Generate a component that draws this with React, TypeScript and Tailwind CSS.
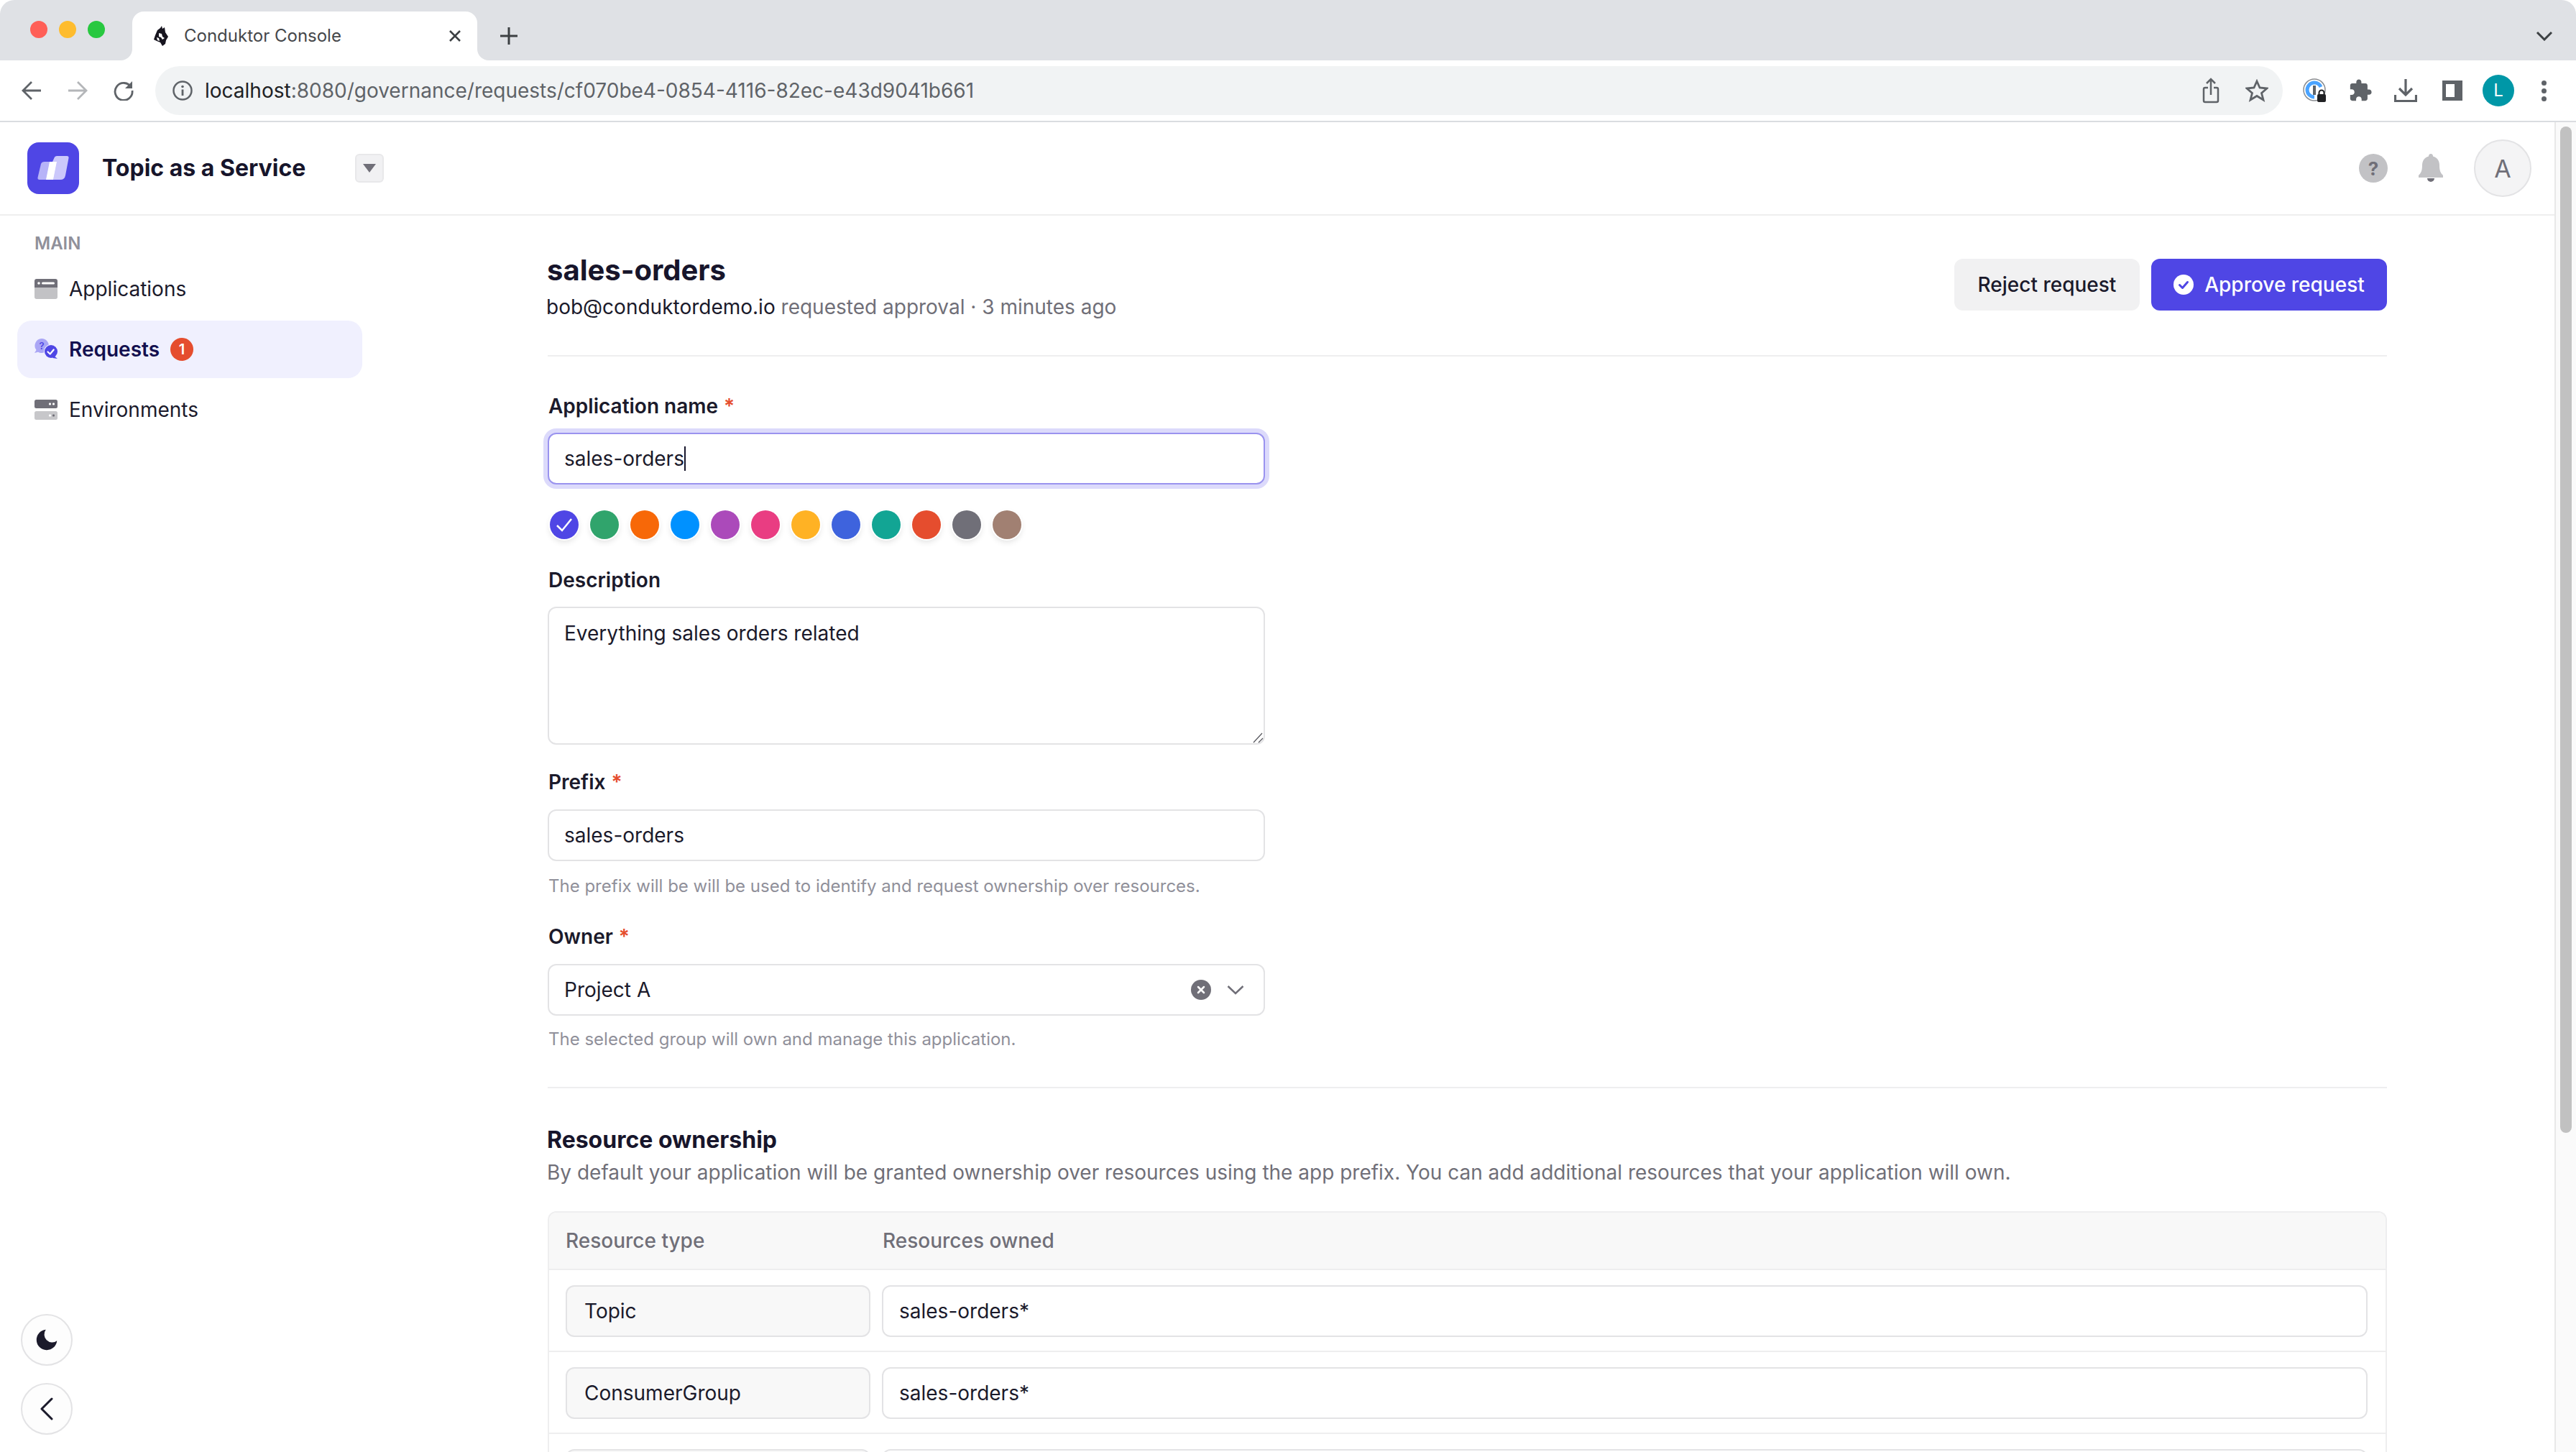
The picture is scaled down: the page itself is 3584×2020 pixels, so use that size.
import React from "react";

const Req = () => <span className="text-[#e54d2e] ml-[8px]">*</span>;

function Label({ children, required, className = "" }: { children: React.ReactNode; required?: boolean; className?: string }) {
  return (
    <div className={`h-[40px] leading-[40px] text-[28px] font-semibold text-[#1b1a2b] pl-[1px] ${className}`}>
      {children}
      {required && <Req />}
    </div>
  );
}

function Field({ children, className = "border-[#e3e3e5]" }: { children: React.ReactNode; className?: string }) {
  return (
    <div className={`w-[998px] h-[72px] rounded-[12px] border-2 bg-white flex items-center pl-[21px] text-[28px] text-[#1b1a2b] ${className}`}>
      {children}
    </div>
  );
}

const swatches = ["#4f46e5", "#30a46c", "#f76808", "#0091ff", "#ab4aba", "#e93d82", "#ffb224", "#3e63dd", "#12a594", "#e54d2e", "#706f78", "#a18072"];

function Logo() {
  return (
    <svg width="72" height="72" viewBox="0 0 72 72">
      <rect width="72" height="72" rx="16" fill="#4f46e5" />
      <path d="M38 20.500 Q39 19 41 19 H55 Q58 19 57.500 22 L53 46 Q52 52 46 52 H30 L35 27 Z" fill="#cbc8fb" />
      <path d="M19 30 Q20 27 24 27 H41 L36 52 H17 Q14 52 14.500 49 Z" fill="#b7b3f8" />
      <path d="M31 27 H41 L36 52 H26 Z" fill="#ffffff" />
    </svg>
  );
}

function AppIcon() {
  return (
    <svg width="32" height="28" viewBox="0 0 32 28">
      <path d="M0 12H32V25a3 3 0 0 1-3 3H3a3 3 0 0 1-3-3Z" fill="#c2c2c5" />
      <path d="M0 12V3a3 3 0 0 1 3-3H29a3 3 0 0 1 3 3V12Z" fill="#706f78" />
      <circle cx="6" cy="6" r="1.800" fill="#fff" />
      <rect x="10" y="4.500" width="18" height="3" rx="1.500" fill="#fff" />
    </svg>
  );
}

function ReqIcon() {
  return (
    <svg width="32" height="30" viewBox="0 0 32 30">
      <path d="M10 0a10 10 0 1 1-5 18.700L0 20l2.500-4A10 10 0 0 1 10 0Z" fill="#aaa6f5" />
      <text x="10" y="15" fontSize="13" fontWeight="600" fill="#4f46e5" textAnchor="middle" fontFamily="Inter, sans-serif">?</text>
      <circle cx="23" cy="18" r="10" fill="#f0f0fe" />
      <circle cx="23" cy="18" r="9" fill="#4f46e5" />
      <path d="M27 24l5 4-7-1Z" fill="#4f46e5" />
      <path d="M18.500 18.500l3.200 3 5-6" fill="none" stroke="#fff" strokeWidth="2.200" strokeLinecap="round" strokeLinejoin="round" />
    </svg>
  );
}

function EnvIcon() {
  return (
    <svg width="32" height="28" viewBox="0 0 32 28">
      <rect width="32" height="12" rx="2.500" fill="#706f78" />
      <rect y="16" width="32" height="12" rx="2.500" fill="#c7c7ca" />
      <rect x="20" y="4.500" width="3" height="3" rx="1" fill="#fff" />
      <rect x="25" y="4.500" width="3" height="3" rx="1" fill="#fff" />
      <rect x="20" y="20.500" width="3" height="3" rx="1" fill="#fff" />
      <rect x="25" y="20.500" width="3" height="3" rx="1" fill="#706f78" />
    </svg>
  );
}

function NavItem({ icon, children, active }: { icon: React.ReactNode; children: React.ReactNode; active?: boolean }) {
  return (
    <div className={`h-[80px] rounded-[20px] flex items-center pl-[24px] text-[28px] ${active ? "bg-[#f0f0fe] text-[#13104f] font-semibold" : "text-[#1b1a2b]"}`}>
      <span className="w-[32px] flex justify-center mr-[16px]">{icon}</span>
      {children}
    </div>
  );
}

function Row({ type, value }: { type: string; value: string }) {
  return (
    <div className="h-[114px] border-b-2 border-[#eeeeef] flex pt-[21px] pl-[23px] pr-[25px] gap-[16px] shrink-0">
      <div className="w-[424px] h-[72px] rounded-[12px] border-2 border-[#e3e3e5] bg-[#f8f8f8] flex items-center pl-[24px] text-[28px] text-[#1b1a2b]">{type}</div>
      <div className="flex-1 h-[72px] rounded-[12px] border-2 border-[#e3e3e5] bg-white flex items-center pl-[22px] text-[28px] text-[#1b1a2b]">{value}</div>
    </div>
  );
}

function Chrome() {
  return (
    <>
      <div className="h-[84px] bg-[#dfe1e5] rounded-t-[20px] flex items-end shrink-0">
        <div className="flex items-center gap-[16px] w-[184px] h-[84px] pl-[42px] pb-[2px]">
          <span className="w-[24px] h-[24px] rounded-full bg-[#ff5f57]" />
          <span className="w-[24px] h-[24px] rounded-full bg-[#febc2e]" />
          <span className="w-[24px] h-[24px] rounded-full bg-[#28c840]" />
        </div>
        <div className="relative w-[480px] h-[68px] bg-white rounded-t-[16px] flex items-center pl-[28px] pr-[22px]">
          <div className="absolute -left-[16px] bottom-0 w-[16px] h-[16px] bg-white"><div className="w-full h-full bg-[#dfe1e5] rounded-br-[16px]" /></div>
          <div className="absolute -right-[16px] bottom-0 w-[16px] h-[16px] bg-white"><div className="w-full h-full bg-[#dfe1e5] rounded-bl-[16px]" /></div>
          <svg width="24" height="28" viewBox="0 0 24 28" className="mr-[20px] shrink-0">
            <path d="M13 0l1 4 3-2 1 7 4 6-3 5-1 5-4 3-3-5-5-2-4-2 2-6 3-7 4-3Z" fill="#17151f" />
            <path d="M9 10l4 1 1 4 3 2-3 2-2-3-3-1ZM6 16l3 1 1 4-3-1Z" fill="#fff" />
          </svg>
          <span className="text-[24px] text-[#45474a] whitespace-nowrap flex-1">Conduktor Console</span>
          <svg width="18" height="20" viewBox="0 0 18 20"><path d="M2 3l14 14M16 3L2 17" stroke="#3c4043" strokeWidth="2.600" /></svg>
        </div>
        <div className="h-[68px] flex items-center ml-[32px]">
          <svg width="24" height="24" viewBox="0 0 24 24"><path d="M12 0v24M0 12h24" stroke="#3c4043" strokeWidth="3" /></svg>
        </div>
        <div className="flex-1" />
        <div className="h-[68px] flex items-center pr-[32px]">
          <svg width="24" height="14" viewBox="0 0 24 14"><path d="M2 2l10 10L22 2" fill="none" stroke="#3c4043" strokeWidth="3" /></svg>
        </div>
      </div>
      <div className="h-[86px] bg-white border-b-2 border-[#dadce0] flex items-center shrink-0">
        <div className="w-[216px] flex items-center pl-[30px] gap-[36px] shrink-0">
          <svg width="28" height="28" viewBox="0 0 28 28"><path d="M27 14H3M14 2 2 14l12 12" fill="none" stroke="#5f6368" strokeWidth="2.800" /></svg>
          <svg width="28" height="28" viewBox="0 0 28 28"><path d="M1 14h24M14 2l12 12-12 12" fill="none" stroke="#b4b6b9" strokeWidth="2.800" /></svg>
          <svg width="28" height="28" viewBox="0 0 28 28"><path d="M24.500 9.500A12 12 0 1 0 26 14" fill="none" stroke="#5f6368" strokeWidth="2.800" /><path d="M26 1v10H16Z" fill="#5f6368" /></svg>
        </div>
        <div className="flex-1 h-[68px] rounded-full bg-[#f1f3f4] flex items-center pl-[24px] pr-[20px]">
          <svg width="28" height="28" viewBox="0 0 28 28" className="mr-[17px] shrink-0"><circle cx="14" cy="14" r="12.500" fill="none" stroke="#5f6368" strokeWidth="2.500" /><path d="M14 12.500V21" stroke="#5f6368" strokeWidth="2.800" /><circle cx="14" cy="8.500" r="1.800" fill="#5f6368" /></svg>
          <span className="text-[28px] text-[#202124] whitespace-nowrap flex-1">localhost<span className="text-[#5f6368]">:8080/governance/requests/cf070be4-0854-4116-82ec-e43d9041b661</span></span>
          <svg width="24" height="36" viewBox="0 0 24 36" className="mr-[36px]"><path d="M8 14H4a2 2 0 0 0-2 2v16a2 2 0 0 0 2 2h16a2 2 0 0 0 2-2V16a2 2 0 0 0-2-2h-4M12 24V3M6 8l6-6 6 6" fill="none" stroke="#5f6368" strokeWidth="2.500" /></svg>
          <svg width="32" height="32" viewBox="0 0 32 32"><path d="M16 3l4 9 10 1-7.500 6.500L25 29l-9-5.500L7 29l2.500-9.500L2 13l10-1Z" fill="none" stroke="#5f6368" strokeWidth="2.800" strokeLinejoin="miter" /></svg>
        </div>
        <div className="w-[408px] flex items-center shrink-0 pl-[28px]">
          <svg width="34" height="34" viewBox="0 0 34 34" className="shrink-0">
            <circle cx="16" cy="16" r="15" fill="none" stroke="#8a8d91" strokeWidth="1.500" />
            <path d="M16 6a10 10 0 1 0 0 20" fill="none" stroke="#4aa3ff" strokeWidth="5" />
            <path d="M16 6a10 10 0 0 1 9 6" fill="none" stroke="#4aa3ff" strokeWidth="5" />
            <rect x="14" y="10" width="4" height="13" fill="#5f6368" />
            <rect x="20" y="22" width="12" height="11" rx="2" fill="#202124" />
            <path d="M22.500 23v-3a3.500 3.500 0 0 1 7 0v3" fill="none" stroke="#202124" strokeWidth="2" />
          </svg>
          <svg width="34" height="34" viewBox="0 0 24 24" className="ml-[29px] shrink-0"><path fill="#5f6368" d="M20.500 11H19V7c0-1.100-.9-2-2-2h-4V3.500C13 2.120 11.880 1 10.500 1S8 2.120 8 3.500V5H4c-1.100 0-1.990.9-1.990 2v3.800H3.500c1.490 0 2.700 1.210 2.700 2.700s-1.210 2.700-2.700 2.700H2V20c0 1.100.9 2 2 2h3.800v-1.500c0-1.490 1.210-2.700 2.700-2.700 1.490 0 2.700 1.210 2.700 2.700V22H17c1.100 0 2-.9 2-2v-4h1.500c1.380 0 2.500-1.120 2.500-2.500S21.880 11 20.500 11z" /></svg>
          <svg width="32" height="32" viewBox="0 0 32 32" className="ml-[30px] shrink-0"><path d="M16 0v21M7 13l9 9 9-9M1.500 22v8.500h29V22" fill="none" stroke="#5f6368" strokeWidth="3.200" /></svg>
          <div className="ml-[35px] w-[28px] h-[28px] border-[5px] border-[#5f6368] border-r-[11px] shrink-0" />
          <div className="ml-[28px] w-[44px] h-[44px] rounded-full bg-[#0097a7] text-white text-[24px] flex items-center justify-center shrink-0">L</div>
          <div className="ml-[38px] flex flex-col gap-[4px] shrink-0">
            <span className="w-[7px] h-[7px] rounded-full bg-[#5f6368]" />
            <span className="w-[7px] h-[7px] rounded-full bg-[#5f6368]" />
            <span className="w-[7px] h-[7px] rounded-full bg-[#5f6368]" />
          </div>
        </div>
      </div>
    </>
  );
}

export default function App() {
  return (
    <div className="w-[3584px] h-[2020px] overflow-hidden flex flex-col bg-white text-[#1b1a2b] [font-family:Inter,sans-serif]">
      <Chrome />
      <div className="flex-1 flex min-h-0">
        <div className="w-[3554px] flex flex-col min-h-0">
          <header className="h-[130px] border-b-2 border-[#eeeeef] flex items-center pl-[38px] pr-[32px] shrink-0">
            <Logo />
            <span className="ml-[32px] text-[32px] font-bold text-[#17152b] w-[352px] whitespace-nowrap">Topic as a Service</span>
            <div className="w-[40px] h-[40px] rounded-[6px] bg-[#f1f1f3] border-2 border-[#e8e8ea] flex items-center justify-center">
              <svg width="20" height="14" viewBox="0 0 20 14"><path d="M1 1h18l-9 12Z" fill="#706f78" /></svg>
            </div>
            <div className="flex-1" />
            <div className="w-[40px] h-[40px] rounded-full bg-[#c2c2c5] text-[#706f78] font-bold text-[26px] flex items-center justify-center">?</div>
            <svg width="36" height="40" viewBox="0 0 36 40" className="ml-[42px]">
              <path d="M18 0c2 0 3 1.500 3 3.500C27 5 30 10 30 16c0 8 2 11 5 14v3H1v-3c3-3 5-6 5-14C6 10 9 5 15 3.500 15 1.500 16 0 18 0Z" fill="#c2c2c5" />
              <path d="M13 34h10a5 5 0 0 1-10 0Z" fill="#706f78" />
            </svg>
            <div className="ml-[42px] w-[80px] h-[80px] rounded-full bg-[#f4f4f5] border-2 border-[#e3e3e5] flex items-center justify-center text-[34px] text-[#706f78]">A</div>
          </header>
          <div className="flex-1 flex min-h-0">
            <aside className="w-[528px] shrink-0 flex flex-col pl-[24px] pr-[24px] pb-[24px]">
              <div className="pt-[23px] pl-[24px] h-[62px] text-[24px] leading-[32px] font-semibold text-[#90909a]">MAIN</div>
              <nav className="flex flex-col gap-[4px]">
                <NavItem icon={<AppIcon />}>Applications</NavItem>
                <NavItem icon={<ReqIcon />} active>
                  Requests
                  <span className="ml-[15px] w-[32px] h-[32px] rounded-full bg-[#e54d2e] text-white text-[20px] font-semibold flex items-center justify-center">1</span>
                </NavItem>
                <NavItem icon={<EnvIcon />}>Environments</NavItem>
              </nav>
              <div className="flex-1" />
              <div className="flex flex-col gap-[24px] pl-[5px]">
                <div className="w-[72px] h-[72px] rounded-full bg-[#fdfdfd] border-2 border-[#e3e3e5] flex items-center justify-center">
                  <svg width="38" height="38" viewBox="0 0 24 24"><path d="M21 12.790A9 9 0 1 1 11.210 3 7 7 0 0 0 21 12.790Z" fill="#1b1a2b" /></svg>
                </div>
                <div className="w-[72px] h-[72px] rounded-full bg-[#fdfdfd] border-2 border-[#e3e3e5] flex items-center justify-center">
                  <svg width="20" height="32" viewBox="0 0 20 32"><path d="M17 2 3 16l14 14" fill="none" stroke="#1b1a2b" strokeWidth="3" strokeLinecap="round" strokeLinejoin="round" /></svg>
                </div>
              </div>
            </aside>
            <main className="flex-1 min-w-0 pl-[234px] pr-[233px] pt-[52px] overflow-hidden">
              <div className="h-[144px] border-b-2 border-[#eeeeef] flex justify-between items-start">
                <div>
                  <div className="h-[48px] leading-[48px] text-[40px] font-bold text-[#17152b] -ml-[1px]">sales-orders</div>
                  <div className="mt-[7px] h-[40px] leading-[40px] text-[28px] text-[#706f78] -ml-[2px]">
                    <span className="text-[#1b1a2b]">bob@conduktordemo.io</span> requested approval · 3 minutes ago
                  </div>
                </div>
                <div className="flex gap-[16px] mt-[8px]">
                  <div className="h-[72px] w-[258px] rounded-[12px] bg-[#f1f1f2] flex items-center justify-center text-[28px] font-medium text-[#1b1a2b]">Reject request</div>
                  <div className="h-[72px] w-[328px] rounded-[12px] bg-[#4f46e5] flex items-center justify-center gap-[15px] text-[28px] font-medium text-white">
                    <svg width="28" height="28" viewBox="0 0 28 28"><circle cx="14" cy="14" r="14" fill="#fff" /><path d="M8.500 14.500l4 4 7-8" fill="none" stroke="#4f46e5" strokeWidth="3" strokeLinecap="round" strokeLinejoin="round" /></svg>
                    Approve request
                  </div>
                </div>
              </div>

              <Label required className="mt-[49px] mb-[17px]">Application name</Label>
              <Field className="border-[#9a93ef] shadow-[0_0_0_6px_#dcdafb]">
                <span>sales-orders</span>
                <span className="w-[2px] h-[34px] bg-[#17152b]" />
              </Field>
              <div className="flex gap-[16px] mt-[36px] ml-[3px]">
                {swatches.map((c, i) => (
                  <div key={c} style={{ backgroundColor: c }} className="w-[40px] h-[40px] rounded-full shadow-[0_0_0_2px_#ffffff,0_4px_8px_rgba(0,0,0,0.12)] flex items-center justify-center">
                    {i === 0 && <svg width="26" height="22" viewBox="0 0 26 22"><path d="M3 12l7 7L23 3" fill="none" stroke="#fff" strokeWidth="2.500" /></svg>}
                  </div>
                ))}
              </div>

              <Label className="mt-[37px] mb-[17px]">Description</Label>
              <div className="relative w-[998px] h-[192px] rounded-[12px] border-2 border-[#e3e3e5] bg-white pl-[21px] pt-[15px] leading-[40px] text-[28px] text-[#1b1a2b]">
                Everything sales orders related
                <svg width="16" height="16" viewBox="0 0 16 16" className="absolute right-0 bottom-0"><path d="M14 2 2 15M15 9l-6 6" stroke="#55555c" strokeWidth="1.200" /></svg>
              </div>

              <Label required className="mt-[32px] mb-[18px]">Prefix</Label>
              <Field>sales-orders</Field>
              <div className="mt-[17px] pl-[1px] h-[36px] leading-[36px] text-[24px] text-[#90909a]">The prefix will be will be used to identify and request ownership over resources.</div>

              <Label required className="mt-[32px] mb-[18px]">Owner</Label>
              <Field className="border-[#e3e3e5] pr-[27px]">
                <span className="flex-1">Project A</span>
                <svg width="28" height="28" viewBox="0 0 28 28"><circle cx="14" cy="14" r="14" fill="#706f78" /><path d="M10 10l8 8M18 10l-8 8" stroke="#fff" strokeWidth="2.500" strokeLinecap="round" /></svg>
                <svg width="24" height="14" viewBox="0 0 24 14" className="ml-[22px]"><path d="M1.500 2 12 12 22.500 2" fill="none" stroke="#706f78" strokeWidth="2.500" /></svg>
              </Field>
              <div className="mt-[15px] pl-[1px] h-[36px] leading-[36px] text-[24px] text-[#90909a]">The selected group will own and manage this application.</div>

              <div className="mt-[48px] border-t-2 border-[#eeeeef]" />
              <div className="mt-[50px] h-[44px] leading-[44px] text-[32px] font-bold text-[#17152b] -ml-[1px]">Resource ownership</div>
              <div className="mt-[3px] h-[40px] leading-[40px] text-[28px] text-[#706f78] whitespace-nowrap -ml-[1px]">By default your application will be granted ownership over resources using the app prefix. You can add additional resources that your application will own.</div>

              <div className="mt-[34px] rounded-t-[12px] border-x-2 border-t-2 border-[#eeeeef] flex flex-col">
                <div className="h-[80px] bg-[#f8f8f8] rounded-t-[10px] border-b-2 border-[#eeeeef] flex items-center pl-[23px] text-[28px] font-medium text-[#706f78] shrink-0">
                  <span className="w-[441px]">Resource type</span>
                  <span>Resources owned</span>
                </div>
                <Row type="Topic" value="sales-orders*" />
                <Row type="ConsumerGroup" value="sales-orders*" />
                <Row type="" value="" />
              </div>
            </main>
          </div>
        </div>
        <div className="w-[30px] shrink-0 bg-[#fafafa] border-l-2 border-[#e8e8e8] pl-[6px] pt-[6px]">
          <div className="w-[16px] h-[1400px] rounded-full bg-[#c1c1c1]" />
        </div>
      </div>
    </div>
  );
}
